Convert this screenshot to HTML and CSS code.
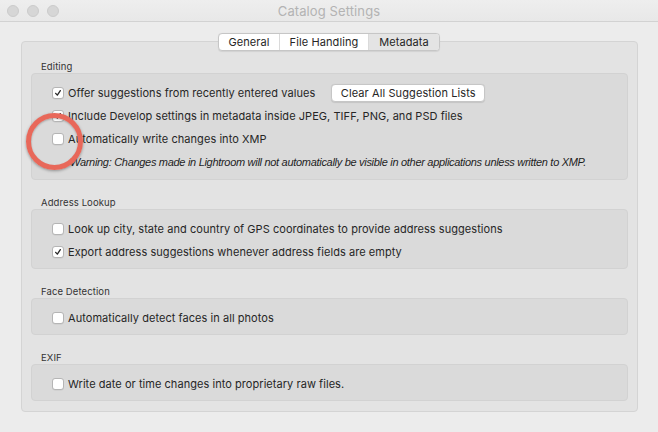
FILE: index.html
```html
<!DOCTYPE html>
<html>
<head>
<meta charset="utf-8">
<link rel="stylesheet" href="styles.css">
</head>
<body>
<div class="window">
  <div class="titlebar">
    <div class="lights"><span class="light"></span><span class="light"></span><span class="light"></span></div>
    <div class="title">Catalog Settings</div>
  </div>
  <div class="content">
    <div class="tabs">
      <div class="seg seg-general">General</div>
      <div class="seg seg-file">File Handling</div>
      <div class="seg seg-meta active">Metadata</div>
    </div>
    <div class="panel">
      <div class="section">
        <div class="label">Editing</div>
        <div class="box">
          <div class="row">
            <span class="cb checked"><svg viewBox="0 0 12 12"><path d="M3.2 6.4 L5.2 8.6 L8.8 3.2" /></svg></span>
            <span class="txt">Offer suggestions from recently entered values</span>
            <span class="btn">Clear All Suggestion Lists</span>
          </div>
          <div class="row">
            <span class="cb checked"><svg viewBox="0 0 12 12"><path d="M3.2 6.4 L5.2 8.6 L8.8 3.2" /></svg></span>
            <span class="txt">Include Develop settings in metadata inside JPEG, TIFF, PNG, and PSD files</span>
          </div>
          <div class="row">
            <span class="cb"></span>
            <span class="txt">Automatically write changes into XMP</span>
          </div>
          <div class="warn">Warning: Changes made in Lightroom will not automatically be visible in other applications unless written to XMP.</div>
        </div>
      </div>
      <div class="section">
        <div class="label">Address Lookup</div>
        <div class="box">
          <div class="row">
            <span class="cb"></span>
            <span class="txt">Look up city, state and country of GPS coordinates to provide address suggestions</span>
          </div>
          <div class="row">
            <span class="cb checked"><svg viewBox="0 0 12 12"><path d="M3.2 6.4 L5.2 8.6 L8.8 3.2" /></svg></span>
            <span class="txt">Export address suggestions whenever address fields are empty</span>
          </div>
        </div>
      </div>
      <div class="section">
        <div class="label">Face Detection</div>
        <div class="box">
          <div class="row">
            <span class="cb"></span>
            <span class="txt">Automatically detect faces in all photos</span>
          </div>
        </div>
      </div>
      <div class="section">
        <div class="label">EXIF</div>
        <div class="box">
          <div class="row">
            <span class="cb"></span>
            <span class="txt">Write date or time changes into proprietary raw files.</span>
          </div>
        </div>
      </div>
    </div>
  </div>
  <div class="highlight"></div>
</div>
</body>
</html>
```

FILE: styles.css
```css
* { box-sizing: border-box; }
html, body { margin: 0; padding: 0; }
body {
  width: 658px;
  height: 432px;
  background: #ececec;
  font-family: "Inter", "Liberation Sans", sans-serif;
  color: #262626;
  overflow: hidden;
}
.window {
  position: relative;
  width: 658px;
  height: 432px;
  background: #ececec;
}
.titlebar {
  position: relative;
  height: 22px;
  background: linear-gradient(#eeeeee, #e8e8e8);
  border-bottom: 1px solid #d2d2d2;
  display: flex;
  align-items: center;
  justify-content: center;
}
.lights {
  position: absolute;
  left: 7px;
  top: 5px;
  display: flex;
  gap: 8px;
}
.light {
  width: 12px;
  height: 12px;
  border-radius: 50%;
  background: #d6d6d6;
  border: 1px solid #cbcbcb;
}
.title {
  font-size: 13px;
  color: #b3b3b3;
  letter-spacing: 0.1px;
}
.content {
  padding: 11px 20px 0 21px;
}
.tabs {
  position: relative;
  z-index: 2;
  display: flex;
  width: 222px;
  height: 18px;
  margin: 0 auto 0 197px;
  background: #ffffff;
  border: 1px solid #c6c6c6;
  border-radius: 4px;
  box-shadow: 0 0.5px 1px rgba(0,0,0,0.08);
  overflow: hidden;
}
.seg {
  font-size: 11px;
  line-height: 16px;
  text-align: center;
  color: #262626;
  letter-spacing: 0.1px;
}
.seg-general { width: 61px; border-right: 1px solid #dadada; }
.seg-file { width: 89px; border-right: 1px solid #dadada; }
.seg-meta { flex: 1; }
.seg.active { background: #e4e4e4; }
.panel {
  margin-top: -10px;
  height: 371px;
  background: #e3e3e3;
  border: 1px solid #d4d4d4;
  border-radius: 4px;
  padding: 19px 9px 0 9px;
  display: flex;
  flex-direction: column;
  gap: 17px;
}
.label {
  height: 12px;
  font-size: 9.5px;
  line-height: 12px;
  padding-left: 10px;
  color: #333333;
  letter-spacing: 0.1px;
}
.box {
  background: #dadada;
  border: 1px solid #d2d2d2;
  border-radius: 4px;
  padding: 7px 0 5px 20px;
}
.row {
  display: flex;
  align-items: center;
  height: 23px;
}
.cb {
  flex: none;
  width: 12px;
  height: 12px;
  border-radius: 3px;
  background: #ffffff;
  border: 1px solid #b5b5b5;
  box-shadow: 0 0.5px 0.5px rgba(0,0,0,0.08);
  margin-right: 4px;
  display: flex;
}
.cb svg {
  width: 10px;
  height: 10px;
  fill: none;
  stroke: #2a2a2a;
  stroke-width: 1.6;
  stroke-linecap: round;
  stroke-linejoin: round;
}
.txt {
  font-size: 11px;
  letter-spacing: 0.05px;
  white-space: nowrap;
}
.btn {
  margin-left: 16px;
  width: 154px;
  height: 18px;
  background: #ffffff;
  border: 1px solid #c6c6c6;
  border-radius: 4px;
  font-size: 11px;
  line-height: 16px;
  letter-spacing: 0.1px;
  text-align: center;
  box-shadow: 0 0.5px 1px rgba(0,0,0,0.1);
}
.warn {
  height: 24px;
  line-height: 24px;
  padding-left: 18px;
  font-family: "Liberation Sans", sans-serif;
  font-style: italic;
  font-size: 11px;
  letter-spacing: -0.3px;
  color: #1e1e1e;
  white-space: nowrap;
}
.highlight {
  position: absolute;
  left: 26px;
  top: 113px;
  width: 57px;
  height: 57px;
  border-radius: 50%;
  border: 5px solid #e8685a;
  box-shadow: 0 1px 3px rgba(0,0,0,0.35), inset 0 1px 2px rgba(0,0,0,0.25);
}
```
